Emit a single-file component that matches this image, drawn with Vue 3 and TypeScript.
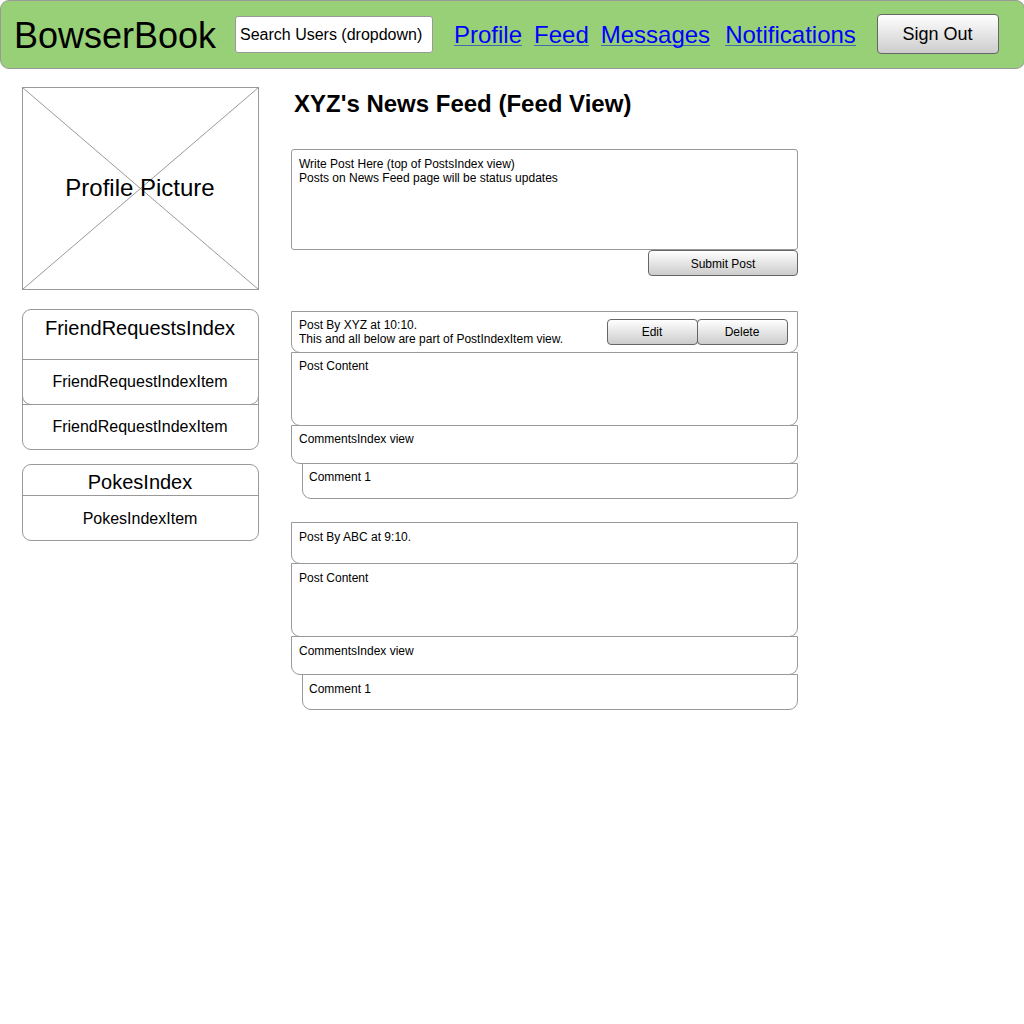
<script setup lang="ts">
interface Post {
  id: number
  lines: string[]
  editable: boolean
}

const links: string[] = ['Profile', 'Feed', 'Messages', 'Notifications']
const posts: Post[] = [
  {
    id: 1,
    lines: ['Post By XYZ at 10:10.', 'This and all below are part of PostIndexItem view.'],
    editable: true,
  },
  { id: 2, lines: ['Post By ABC at 9:10.'], editable: false },
]
</script>

<template>
  <div class="page">
    <header class="bar">
      <div class="brand">BowserBook</div>
      <div class="search">Search Users (dropdown)</div>
      <nav class="links">
        <a v-for="link in links" :key="link" class="link">{{ link }}</a>
      </nav>
      <button class="btn sign-out">Sign Out</button>
    </header>

    <div class="columns">
      <aside class="side">
        <div class="picture">
          <svg class="cross" width="237" height="203" viewBox="0 0 237 203">
            <path d="M.5 .5 236.5 202.5M236.5 .5 .5 202.5" stroke="#999" fill="none" />
            <rect x=".5" y=".5" width="236" height="202" stroke="#999" fill="none" />
          </svg>
          <span class="caption">Profile Picture</span>
        </div>
        <section class="group friends">
          <h2 class="group-title">FriendRequestsIndex</h2>
          <div class="item">FriendRequestIndexItem</div>
          <div class="item">FriendRequestIndexItem</div>
        </section>
        <section class="group pokes">
          <h2 class="group-title">PokesIndex</h2>
          <div class="item">PokesIndexItem</div>
        </section>
      </aside>

      <main class="feed">
        <h1 class="title">XYZ's News Feed (Feed View)</h1>
        <div class="compose">
          Write Post Here (top of PostsIndex view)<br />Posts on News Feed page will be status updates
        </div>
        <button class="btn submit">Submit Post</button>

        <article v-for="post in posts" :key="post.id" class="post" :class="{ plain: !post.editable }">
          <div class="cell head">
            <div>
              <div v-for="line in post.lines" :key="line">{{ line }}</div>
            </div>
            <div v-if="post.editable" class="actions">
              <button class="btn small">Edit</button>
              <button class="btn small">Delete</button>
            </div>
          </div>
          <div class="cell content">Post Content</div>
          <div class="cell comments">CommentsIndex view</div>
          <div class="cell comment">Comment 1</div>
        </article>
      </main>
    </div>
  </div>
</template>

<style>
body {
  margin: 0;
  background: #fff;
}
</style>

<style scoped>
.page {
  width: 1024px;
  height: 1024px;
  overflow: hidden;
  color: #000;
  font-family: 'Liberation Sans', Arial, sans-serif;
}
.page * {
  box-sizing: border-box;
}
.bar {
  display: flex;
  align-items: flex-start;
  width: 1025px;
  height: 69px;
  border: 1px solid #999;
  border-radius: 9px;
  background: #97d077;
  white-space: nowrap;
}
.brand {
  width: 221px;
  margin: 14px 0 0 13px;
  font-size: 36px;
  line-height: 42px;
}
.search {
  width: 198px;
  height: 37px;
  margin-top: 15px;
  padding-left: 4px;
  border: 1px solid #999;
  border-radius: 3px;
  background: #fff;
  font-size: 16px;
  line-height: 35px;
}
.links {
  display: flex;
  width: 444px;
  padding: 19px 0 0 21px;
}
.link {
  height: 26px;
  margin-right: 12px;
  border-bottom: 1px solid #4169b0;
  color: #00f;
  font-size: 24px;
  line-height: 29px;
}
.link:nth-child(3) {
  margin-right: 15px;
}
.btn {
  padding: 0 1px 0 0;
  border: 1px solid #666;
  border-radius: 4px;
  background: linear-gradient(#fff, #ccc);
  color: #000;
  font-family: inherit;
  font-size: 12px;
}
.sign-out {
  width: 122px;
  height: 40px;
  margin-top: 13px;
  font-size: 18px;
}
.columns {
  display: flex;
  gap: 32px;
  padding: 18px 0 0 22px;
}
.side {
  width: 237px;
  text-align: center;
}
.picture {
  position: relative;
  display: flex;
  align-items: center;
  justify-content: center;
  height: 203px;
}
.cross {
  position: absolute;
  inset: 0;
}
.caption {
  position: relative;
  padding: 0 1px 2px 0;
  font-size: 24px;
  line-height: 28px;
}
.group {
  border: 1px solid #999;
  border-radius: 9px;
}
.friends {
  height: 141px;
  margin-top: 19px;
}
.pokes {
  height: 77px;
  margin-top: 14px;
}
.group-title {
  height: 49px;
  margin: 0;
  padding: 6px 1px 0 0;
  font-size: 20px;
  font-weight: 400;
  line-height: 24px;
}
.pokes .group-title {
  height: 30px;
  padding-top: 5px;
}
.item {
  height: 46px;
  margin: 0 -1px -1px;
  padding-right: 1px;
  border: 1px solid #999;
  border-radius: 0 0 9px 9px;
  font-size: 16px;
  line-height: 44px;
}
.item:last-child {
  margin: 0;
  border-width: 1px 0 0;
  border-radius: 0;
}
.pokes .item {
  line-height: 46px;
}
.feed {
  display: flex;
  flex-direction: column;
  width: 507px;
  font-size: 12px;
  line-height: 14px;
}
.title {
  height: 62px;
  margin: 0;
  padding: 3px 0 0 3px;
  font-size: 24px;
  line-height: 28px;
}
.compose {
  height: 101px;
  padding: 7px;
  border: 1px solid #999;
  border-radius: 3px;
}
.submit {
  align-self: flex-end;
  width: 150px;
  height: 26px;
  margin-bottom: 35px;
  padding: 2px 0 0;
}
.post {
  margin-bottom: 23px;
}
.cell {
  margin-bottom: -1px;
  padding: 6px 7px;
  border: 1px solid #999;
  border-radius: 0 0 9px 9px;
}
.plain .cell {
  padding-top: 7px;
}
.head {
  display: flex;
  justify-content: space-between;
  height: 42px;
}
.actions {
  display: flex;
  margin: 1px 2px 0 0;
}
.small {
  width: 91px;
  height: 26px;
}
.small + .small {
  margin-left: -1px;
}
.content {
  height: 74px;
}
.comments {
  height: 39px;
}
.comment {
  height: 36px;
  margin: 0 0 0 11px;
  padding-left: 6px;
}
</style>
